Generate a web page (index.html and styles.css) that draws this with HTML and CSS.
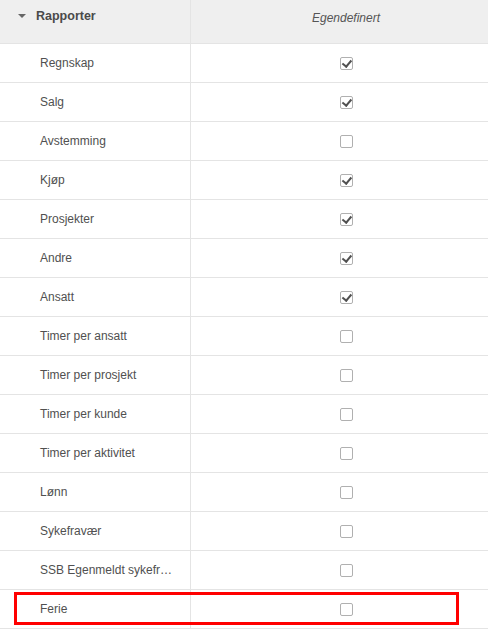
FILE: index.html
```html
<!DOCTYPE html>
<html>
<head>
    <meta charset="UTF-8">
    <title>Rapporter</title>
    <link rel="stylesheet" href="styles.css">
</head>
<body>
    <div class="grid">
        <div class="row head">
            <div class="cell name"><span class="caret"></span>Rapporter</div>
            <div class="cell mark"><em>Egendefinert</em></div>
        </div>

        <div class="row"><div class="cell name">Regnskap</div><div class="cell mark"><span class="box on"></span></div></div>
        <div class="row"><div class="cell name">Salg</div><div class="cell mark"><span class="box on"></span></div></div>
        <div class="row"><div class="cell name">Avstemming</div><div class="cell mark"><span class="box"></span></div></div>
        <div class="row"><div class="cell name">Kjøp</div><div class="cell mark"><span class="box on"></span></div></div>
        <div class="row"><div class="cell name">Prosjekter</div><div class="cell mark"><span class="box on"></span></div></div>
        <div class="row"><div class="cell name">Andre</div><div class="cell mark"><span class="box on"></span></div></div>
        <div class="row"><div class="cell name">Ansatt</div><div class="cell mark"><span class="box on"></span></div></div>
        <div class="row"><div class="cell name">Timer per ansatt</div><div class="cell mark"><span class="box"></span></div></div>
        <div class="row"><div class="cell name">Timer per prosjekt</div><div class="cell mark"><span class="box"></span></div></div>
        <div class="row"><div class="cell name">Timer per kunde</div><div class="cell mark"><span class="box"></span></div></div>
        <div class="row"><div class="cell name">Timer per aktivitet</div><div class="cell mark"><span class="box"></span></div></div>
        <div class="row"><div class="cell name">Lønn</div><div class="cell mark"><span class="box"></span></div></div>
        <div class="row"><div class="cell name">Sykefravær</div><div class="cell mark"><span class="box"></span></div></div>
        <div class="row"><div class="cell name">SSB Egenmeldt sykefravær</div><div class="cell mark"><span class="box"></span></div></div>
        <div class="row"><div class="cell name">Ferie</div><div class="cell mark"><span class="box"></span></div></div>

        <!-- markering rundt Ferie -->
        <div class="highlight"></div>
    </div>
</body>
</html>
```

FILE: styles.css
```css
* {
    box-sizing: border-box;
    margin: 0;
    padding: 0;
}
body {
    font-family: "Liberation Sans", Arial, sans-serif;
    font-size: 12px;
    color: #505050;
    background-color: #fff;
    overflow: hidden;
}
.grid {
    position: relative;
    width: 488px;
}
.row {
    display: grid;
    grid-template-columns: 191px 1fr;
    height: 39px;
    border-bottom: 1px solid #e4e4e4;
}
.row.head {
    height: 44px;
    background-color: #efefef;
}
.cell {
    display: flex;
    align-items: center;
    min-width: 0;
}
.name {
    display: block;
    border-right: 1px solid #e4e4e4;
    padding-left: 40px;
    padding-right: 12px;
    line-height: 38px;
    white-space: nowrap;
    overflow: hidden;
    text-overflow: ellipsis;
}
.head .name {
    padding-left: 36px;
    line-height: 32px;
    font-weight: bold;
    font-size: 12.5px;
    color: #4a4a4a;
    position: relative;
}
.caret {
    position: absolute;
    left: 18px;
    top: 14px;
    width: 0;
    height: 0;
    border-left: 4px solid transparent;
    border-right: 4px solid transparent;
    border-top: 4px solid #666;
}
.mark {
    justify-content: center;
    padding-left: 13px;
}
.head .mark {
    align-items: flex-start;
    padding-top: 11px;
    color: #555;
}
.box {
    display: inline-block;
    width: 13px;
    height: 13px;
    border: 1px solid #b0b0b0;
    border-radius: 2px;
    background-color: #fff;
    position: relative;
}
.box.on::after {
    content: "";
    position: absolute;
    left: 3.5px;
    top: 0.5px;
    width: 3.5px;
    height: 7px;
    border-right: 2px solid #505050;
    border-bottom: 2px solid #505050;
    transform: rotate(40deg);
}
.highlight {
    position: absolute;
    left: 14px;
    top: 592px;
    width: 445px;
    height: 33px;
    border: 3px solid #f00;
}
```
